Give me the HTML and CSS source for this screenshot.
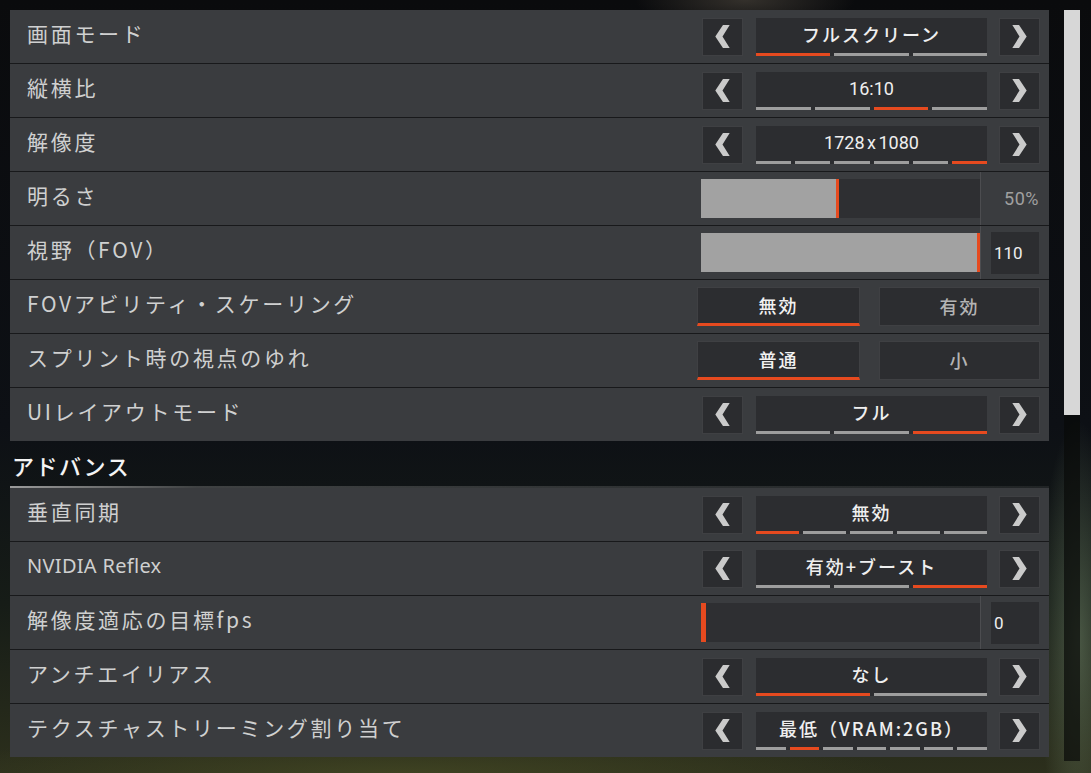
FILE: index.html
```html
<!DOCTYPE html>
<html lang="ja">
<head>
    <meta charset="UTF-8">
    <title>ビデオ設定</title>
    <link rel="stylesheet" href="styles.css">
</head>
<body>
    <svg class="defs" width="0" height="0">
        <symbol id="chev-left" viewBox="0 0 15 24">
            <polygon points="8,0 15,0 7.5,12 15,24 8,24 0,12"/>
        </symbol>
        <symbol id="chev-right" viewBox="0 0 15 24">
            <polygon points="7,0 0,0 7.5,12 0,24 7,24 15,12"/>
        </symbol>
    </svg>

    <div class="screen">
        <div class="settings">
            <div class="panel">
                <div class="row">
                    <div class="label">画面モード</div>
                    <div class="picker">
                        <div class="arrow"><svg><use href="#chev-left"/></svg></div>
                        <div class="choice">
                            <span class="choice-text">フルスクリーン</span>
                            <div class="steps"><i class="on"></i><i></i><i></i></div>
                        </div>
                        <div class="arrow"><svg><use href="#chev-right"/></svg></div>
                    </div>
                </div>
                <div class="row">
                    <div class="label">縦横比</div>
                    <div class="picker">
                        <div class="arrow"><svg><use href="#chev-left"/></svg></div>
                        <div class="choice">
                            <span class="choice-text num">16:10</span>
                            <div class="steps"><i></i><i></i><i class="on"></i><i></i></div>
                        </div>
                        <div class="arrow"><svg><use href="#chev-right"/></svg></div>
                    </div>
                </div>
                <div class="row">
                    <div class="label">解像度</div>
                    <div class="picker">
                        <div class="arrow"><svg><use href="#chev-left"/></svg></div>
                        <div class="choice">
                            <span class="choice-text num">1728 x 1080</span>
                            <div class="steps"><i></i><i></i><i></i><i></i><i></i><i class="on"></i></div>
                        </div>
                        <div class="arrow"><svg><use href="#chev-right"/></svg></div>
                    </div>
                </div>
                <div class="row">
                    <div class="label">明るさ</div>
                    <div class="slider">
                        <div class="track"><div class="fill" style="width: 138px"></div></div>
                        <div class="readout"><span class="plain-value">50%</span></div>
                    </div>
                </div>
                <div class="row">
                    <div class="label">視野（FOV）</div>
                    <div class="slider">
                        <div class="track"><div class="fill" style="width: 279px"></div></div>
                        <div class="readout"><span class="box-value">110</span></div>
                    </div>
                </div>
                <div class="row">
                    <div class="label">FOVアビリティ・スケーリング</div>
                    <div class="toggle">
                        <div class="opt selected">無効</div>
                        <div class="opt">有効</div>
                    </div>
                </div>
                <div class="row">
                    <div class="label">スプリント時の視点のゆれ</div>
                    <div class="toggle">
                        <div class="opt selected">普通</div>
                        <div class="opt">小</div>
                    </div>
                </div>
                <div class="row">
                    <div class="label">UIレイアウトモード</div>
                    <div class="picker">
                        <div class="arrow"><svg><use href="#chev-left"/></svg></div>
                        <div class="choice">
                            <span class="choice-text">フル</span>
                            <div class="steps"><i></i><i></i><i class="on"></i></div>
                        </div>
                        <div class="arrow"><svg><use href="#chev-right"/></svg></div>
                    </div>
                </div>
            </div>

            <h2 class="section">アドバンス</h2>

            <div class="panel">
                <div class="row">
                    <div class="label">垂直同期</div>
                    <div class="picker">
                        <div class="arrow"><svg><use href="#chev-left"/></svg></div>
                        <div class="choice">
                            <span class="choice-text">無効</span>
                            <div class="steps"><i class="on"></i><i></i><i></i><i></i><i></i></div>
                        </div>
                        <div class="arrow"><svg><use href="#chev-right"/></svg></div>
                    </div>
                </div>
                <div class="row">
                    <div class="label latin">NVIDIA Reflex</div>
                    <div class="picker">
                        <div class="arrow"><svg><use href="#chev-left"/></svg></div>
                        <div class="choice">
                            <span class="choice-text">有効+ブースト</span>
                            <div class="steps"><i></i><i></i><i class="on"></i></div>
                        </div>
                        <div class="arrow"><svg><use href="#chev-right"/></svg></div>
                    </div>
                </div>
                <div class="row">
                    <div class="label">解像度適応の目標fps</div>
                    <div class="slider">
                        <div class="track"><div class="fill empty" style="width: 5px"></div></div>
                        <div class="readout"><span class="box-value">0</span></div>
                    </div>
                </div>
                <div class="row">
                    <div class="label">アンチエイリアス</div>
                    <div class="picker">
                        <div class="arrow"><svg><use href="#chev-left"/></svg></div>
                        <div class="choice">
                            <span class="choice-text">なし</span>
                            <div class="steps"><i class="on"></i><i></i></div>
                        </div>
                        <div class="arrow"><svg><use href="#chev-right"/></svg></div>
                    </div>
                </div>
                <div class="row">
                    <div class="label">テクスチャストリーミング割り当て</div>
                    <div class="picker">
                        <div class="arrow"><svg><use href="#chev-left"/></svg></div>
                        <div class="choice">
                            <span class="choice-text">最低（VRAM:2GB）</span>
                            <div class="steps"><i></i><i class="on"></i><i></i><i></i><i></i><i></i><i></i></div>
                        </div>
                        <div class="arrow"><svg><use href="#chev-right"/></svg></div>
                    </div>
                </div>
            </div>
        </div>

        <div class="scrollbar"><div class="thumb"></div></div>
    </div>
</body>
</html>
```

FILE: styles.css
```css
body {
    margin: 0;
    width: 1091px;
    height: 773px;
    overflow: hidden;
    font-family: "Noto Sans CJK JP", "Noto Sans", sans-serif;
    background:
        radial-gradient(ellipse 110px 30px at 745px 0, rgba(130, 118, 100, 0.35), transparent),
        radial-gradient(ellipse 40px 220px at 1078px 640px, rgba(112, 132, 104, 0.55), transparent),
        radial-gradient(ellipse 500px 40px at 400px 773px, rgba(70, 74, 36, 0.7), transparent),
        linear-gradient(to bottom, #0a0b0d 0%, #0d1015 55%, #161c17 78%, #2c2f1c 100%);
}
.defs {
    position: absolute;
}
.screen {
    display: flex;
    align-items: flex-start;
    padding: 10px 0 0 10px;
}
.settings {
    width: 1039px;
}

/* rows */
.panel {
    display: flex;
    flex-direction: column;
    gap: 1px;
    background: #18191b;
}
.row {
    height: 53px;
    display: flex;
    align-items: center;
    padding: 0 9px 0 17px;
    background: #3a3c3f;
}
.label {
    flex: 1;
    font-size: 21px;
    line-height: 1.2;
    letter-spacing: 2.7px;
    color: #cfd0d0;
    padding-bottom: 5px;
}
.label.latin {
    font-family: "Noto Sans", sans-serif;
    font-size: 20px;
    letter-spacing: 0.3px;
}

.section {
    margin: 0;
    height: 43px;
    padding: 2px 0 0 2px;
    display: flex;
    align-items: center;
    font-size: 22px;
    font-weight: 500;
    letter-spacing: 1.5px;
    color: #f4f4f4;
    border-bottom: 2px solid transparent;
    border-image: linear-gradient(to right, #9c9c9c, rgba(150, 150, 150, 0.35) 18%, rgba(150, 150, 150, 0.12)) 1;
}

/* arrow picker */
.picker {
    display: flex;
    width: 338px;
    height: 38px;
}
.arrow {
    width: 39px;
    height: 36px;
    border: 1px solid #3f4043;
    background: #2b2c2f;
    display: flex;
    align-items: center;
    justify-content: center;
}
.arrow svg {
    width: 15px;
    height: 23px;
    fill: #cacaca;
}
.choice {
    width: 231px;
    margin: 0 12px 0 13px;
    background: #2c2d30;
    display: flex;
    flex-direction: column;
}
.choice-text {
    flex: 1;
    display: flex;
    align-items: center;
    justify-content: center;
    font-size: 18px;
    font-weight: 500;
    letter-spacing: 2px;
    color: #efefef;
    padding-bottom: 2px;
}
.choice-text.num {
    font-family: "Roboto", sans-serif;
    font-size: 18px;
    font-weight: 400;
    letter-spacing: 0;
    word-spacing: -2px;
}
.steps {
    display: flex;
    gap: 4px;
    height: 3px;
}
.steps i {
    flex: 1;
    background: #9e9e9e;
}
.steps i.on {
    background: #e64a1f;
}

/* slider */
.slider {
    display: flex;
    align-items: center;
    width: 348px;
    height: 53px;
    margin-right: -9px;
}
.track {
    width: 279px;
    height: 39px;
    background: #2e2f32;
}
.fill {
    height: 100%;
    box-sizing: border-box;
    background: #a2a2a2;
    border-right: 3px solid #e64a1f;
}
.fill.empty {
    background: #e64a1f;
    border: none;
}
.readout {
    flex: 1;
    align-self: stretch;
    border-left: 1px solid #4c4d50;
    display: flex;
    align-items: center;
    padding: 0 9px 0 10px;
}
.plain-value {
    margin-left: auto;
    margin-right: 1px;
    font-family: "Roboto", sans-serif;
    font-size: 18px;
    letter-spacing: 0.5px;
    color: #a0a0a0;
}
.box-value {
    width: 45px;
    height: 42px;
    background: #2c2d30;
    display: flex;
    align-items: center;
    padding-left: 3px;
    font-family: "Roboto", sans-serif;
    font-size: 17px;
    color: #eeeeee;
}

/* two-way toggle */
.toggle {
    display: grid;
    grid-template-columns: 163px 161px;
    column-gap: 19px;
}
.opt {
    height: 35px;
    padding-bottom: 2px;
    border: 1px solid #3f4043;
    background: #2c2d30;
    display: flex;
    align-items: center;
    justify-content: center;
    font-size: 18px;
    font-weight: 500;
    letter-spacing: 2px;
    color: #b4b4b4;
}
.opt.selected {
    color: #f2f2f2;
    border-bottom: 3px solid #e64a1f;
    height: 33px;
}

.scrollbar {
    margin-left: 15px;
    width: 16px;
    height: 751px;
    background: rgba(8, 10, 8, 0.7);
}
.thumb {
    height: 405px;
    background: #d7d7d7;
}
```
